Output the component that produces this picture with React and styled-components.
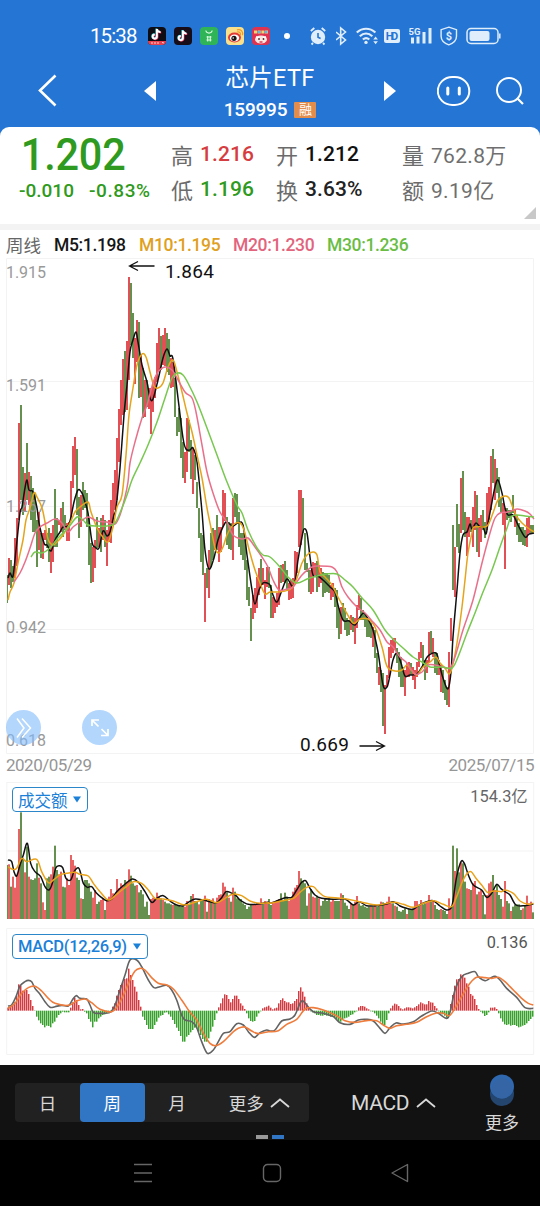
import styled, { createGlobalStyle } from "styled-components";

const GlobalStyle = createGlobalStyle`
  * {
    box-sizing: border-box;
  }
  body {
    margin: 0;
    background: #fff;
    font-family: Roboto, "Noto Sans CJK SC", sans-serif;
  }
  svg {
    display: block;
    flex: none;
  }
`;

const RED = "#e05054";
const GREEN = "#66904f";

// one candle per week: colour, high, low
const CANDLES = `
g575-603 r558-585 g560-588 g566-582 r538-578 r518-566 r423-520 g405-500 g467-515 r473-512
g443-500 r472-505 g476-520 g488-532 g493-532 g520-567 r512-550 g533-558 r533-559 r530-540
g533-548 g528-562 r533-573 r525-562 g489-547 g518-547 r520-525 r508-532 g502-537 g515-530
r523-541 r522-541 r481-520 r446-488 r437-475 g449-515 g497-538 r495-527 g482-510 g490-508
g493-527 g518-565 g543-583 r547-582 r540-568 g517-548 r528-547 g518-552 r515-540 g520-547
r530-566 r520-542 r500-543 r483-525 r470-510 r438-500 r409-462 r380-425 r359-415 g351-412
r341-410 r277-380 g283-345 g313-358 r338-384 r320-362 g322-398 r355-397 g368-418 r380-417
g380-407 r388-409 r388-434 r385-412 r377-398 r343-382 r328-372 g336-370 r335-365 r328-366
g333-372 g339-375 r358-388 r362-387 g378-417 g417-436 g408-432 g418-458 g442-478 r452-483
r418-472 g420-452 g440-479 r448-494 g455-480 g482-508 g508-538 g533-562 g535-575 r573-622
g568-588 r550-598 g533-567 g528-560 r530-550 g515-550 r527-562 r527-552 r490-527 r493-521
g517-545 g522-549 g523-550 r498-560 g493-517 g494-523 g512-547 g533-555 g533-560 g537-570
g560-600 g587-606 g608-641 r595-619 r588-613 r577-608 r568-595 g559-588 r568-585 r580-599
r567-587 g567-588 g585-618 r597-618 r600-613 r593-607 r568-605 g565-583 r564-582 g561-583
g570-590 r583-600 r580-599 r578-598 r551-583 r552-573 r490-547 r490-545 g498-533 g533-570
g563-572 g570-592 r570-594 r562-592 r563-575 g561-592 r565-587 r568-583 g572-597 g573-593
g573-592 g575-593 r585-600 r583-597 g588-607 g590-628 g608-639 r607-634 g603-620 g608-630
g618-636 g620-635 r615-630 g617-632 r618-644 r605-628 r595-610 g598-620 g610-620 g613-627
g617-637 g620-637 g623-638 r627-647 g630-658 g653-673 r667-685 g670-692 g673-726 r685-734
r675-687 r647-678 r640-658 r638-653 r638-650 g648-663 g652-677 g657-687 g667-687 r670-696
r663-677 r662-677 g663-675 r667-680 r670-689 r662-677 r652-667 r642-658 g645-667 g660-680
r660-673 r632-663 g631-653 r638-657 g652-673 g653-675 r660-675 r665-692 g670-693 g680-700
g687-705 r652-707 r618-641 g525-590 r547-597 g504-547 g524-553 r478-533 g471-530 g512-537
r517-556 r517-537 g520-532 r507-547 r491-530 g495-552 r518-557 r515-542 g510-530 g522-538
r493-530 r487-520 r456-510 g449-483 r459-500 g468-493 g477-507 g498-512 r503-525 r508-569
g508-520 g510-518 g510-522 g495-513 r510-527 g515-535 g523-542 g527-542 g527-545 g530-546
r518-547 r517-533 g525-533 g525-533`;

// turnover bars, top edge in thirds of a pixel
const TURNOVER = `
g270 r268 g335 r305 r338 r300 r162 g112 g250 r292 g215 r305 g313 g315 g310 g265 r308 g325 r382 r405
g310 g305 r298 r275 g212 g285 r298 r290 g335 g337 r310 r330 r240 r255 r272 g308 g315 r370 g372 g315
g315 g325 g350 r368 r345 g387 g380 r375 r370 g405 r375 r365 r342 r355 r362 r312 r340 r325 r330 g315
r320 r283 g302 g325 g332 r330 g352 g345 g358 g395 g380 g420 r372 r368 r370 r353 r365 g370 r375 g380
g385 g385 g388 r390 g390 g392 g390 g395 g392 r395 r378 g390 g363 r357 g378 g378 r388 g378 g378 r362
g410 r372 g375 r370 g383 r368 r360 r358 r323 r335 g352 r368 g380 r338 g350 g370 g372 g372 g385 g390
g402 g395 g388 r388 r388 r385 r385 r370 g385 r378 r380 g372 g390 r380 r382 r375 r372 g355 g375 g353
g365 r378 r370 r350 r338 r330 r288 g310 g318 g325 g392 r355 g342 r365 r368 g362 r370 g392 g378 g370
g378 g370 r380 r375 g378 g378 g378 r355 g360 g383 g392 g402 r385 g388 r380 r363 g385 g392 g390 g395
g398 g395 r395 g395 r390 g395 g392 r380 g382 r385 r380 r365 r385 g385 r392 g395 g408 g410 g405 g400
r417 g402 g402 g400 r378 r378 g390 r375 g388 g385 r378 r360 g380 r378 g390 g402 g405 r402 g405 g408
g417 r370 r398 g212 r288 g220 g292 r262 g265 g320 r340 r342 g345 r325 r318 g358 r350 r345 g360 g418
r360 r325 r320 g300 r345 g330 g360 g372 r395 r318 g378 g385 r408 g395 g390 g388 g388 g405 r400 g392
r362 r385 r380 g412`;

// macd histogram, free end of each bar in thirds of a pixel
const HISTOGRAM = `
248 246 242 240 232 212 178 183 197 197 195 207 225 243 257 275 286 295 300 307
302 303 307 295 290 278 270 265 260 262 262 262 248 232 218 225 240 253 252 260
265 282 290 307 290 290 280 275 270 268 265 262 260 245 235 212 195 180 170 162
160 131 150 165 185 200 225 245 275 285 300 312 312 312 300 290 278 272 270 263
262 268 275 285 297 308 318 333 350 350 335 330 322 315 308 310 320 330 342 350
350 340 320 305 285 265 247 235 220 208 210 222 232 222 212 212 222 235 242 252
265 280 288 290 288 275 265 259 250 247 245 242 248 253 250 248 235 225 220 228
232 232 237 235 228 222 198 187 200 215 235 248 259 262 265 270 270 272 272 270
272 272 275 275 280 285 292 290 283 280 278 275 270 268 262 259 247 243 243 245
250 253 259 260 265 272 280 290 300 300 285 265 250 242 236 238 243 250 253 250
247 247 248 250 247 243 238 232 235 238 238 228 232 233 243 250 259 265 268 272
278 272 237 210 182 163 162 148 150 158 175 185 207 212 222 240 252 260 265 273
270 262 248 248 247 252 265 280 290 298 300 298 302 300 300 303 307 305 302 300
295 288 282 275`;

const MA5 =
  "8,578 10,573 13,576 16,550 20,513 22,507 25,488 27,480 29,490 33,492 37,508 39,523 44,543 47,545 51,551 55,540 60,532 63,527 68,526 71,517 74,502 78,490 82,493 85,502 88,513 92,542 95,547 99,548 103,531 107,536 110,532 114,515 116,508 120,468 124,415 127,385 130,352 133,340 136,332 138,342 142,365 147,382 150,398 153,399 158,380 163,358 167,349 170,356 173,359 178,398 183,438 186,449 190,450 193,448 197,462 202,512 205,550 209,569 214,558 218,540 225,523 228,523 233,526 238,523 243,525 247,555 252,590 255,604 259,590 263,583 267,583 270,585 273,595 277,602 282,590 287,579 292,586 295,582 298,560 302,537 304,529 307,533 310,557 313,575 318,576 323,580 330,587 335,592 338,605 343,620 349,621 355,625 360,617 364,613 369,621 373,630 378,652 383,685 387,687 390,675 393,660 397,653 401,663 405,676 410,675 417,674 422,667 428,656 436,653 439,663 443,678 448,689 451,672 453,637 457,590 460,553 463,535 467,532 470,524 472,529 476,523 480,527 483,527 486,534 488,523 492,502 495,487 498,480 502,493 505,508 508,515 513,515 518,525 525,537 529,534 534,533";
const MA10 =
  "8,600 10,592 14,583 18,563 23,540 26,520 30,508 34,493 37,497 42,508 45,522 48,539 53,545 58,541 63,535 70,523 75,512 80,507 88,502 91,512 97,528 102,536 108,542 113,527 117,507 122,495 126,455 129,415 133,388 137,365 142,354 146,357 150,372 154,386 158,388 163,383 168,367 173,360 177,372 182,392 187,413 192,432 197,455 202,478 207,508 211,528 215,548 219,553 223,547 227,535 233,525 240,523 244,530 250,553 255,570 260,583 265,594 270,592 278,592 285,591 292,588 297,578 302,563 307,555 313,552 317,555 320,572 325,577 332,585 338,597 345,610 352,622 355,623 360,619 368,619 375,627 382,647 385,660 388,668 395,671 402,670 407,665 412,671 417,675 423,667 430,662 436,657 440,663 445,668 449,674 452,668 457,643 462,607 465,580 468,553 472,533 474,527 483,527 488,525 493,513 498,500 505,496 509,498 513,508 517,517 522,523 528,528 534,532";
const MA20 =
  "14,582 20,573 25,562 30,548 35,533 40,527 47,523 55,519 62,523 68,532 73,527 80,522 88,517 97,521 107,522 115,524 120,515 125,497 128,482 130,463 135,442 142,418 147,405 153,383 158,372 165,367 172,370 177,378 185,392 192,398 196,412 202,445 207,472 213,493 220,512 227,522 233,535 242,539 248,538 255,547 262,557 268,567 273,580 279,590 287,589 293,587 302,575 312,567 320,566 332,567 337,572 342,587 348,597 357,607 365,613 373,622 380,630 387,642 393,647 400,657 407,663 415,674 422,672 428,665 435,665 443,667 450,668 455,657 463,630 473,600 482,563 490,533 495,518 500,513 508,512 517,509 525,511 530,514 534,519";
const MA30 =
  "31,557 35,552 42,553 50,548 58,538 68,528 77,517 83,520 88,525 97,526 107,526 115,523 122,508 127,495 132,480 140,463 148,445 157,422 165,398 172,378 178,373 183,375 188,383 197,402 207,428 217,455 227,482 237,505 242,513 248,530 257,548 263,555 270,557 280,567 288,577 297,583 307,579 317,576 327,574 337,574 345,580 353,587 362,598 373,610 385,630 393,639 403,648 413,657 422,662 430,667 442,667 452,668 458,657 467,633 475,613 483,592 492,570 500,547 507,528 511,517 517,515 525,516 534,517";

// left and right halves of the small charts, each counted from its own edge
const VOL5 = [
  "24,255 35,260 42,290 50,303 60,270 70,240 82,205 92,265 105,290 122,305 135,335 147,345 157,325 167,280 178,272 188,278 198,310 212,315 222,290 235,278 242,295 250,325 262,337 275,335 290,355 305,368 320,377 335,372 350,350 372,330 397,312 415,322 435,350 455,382 470,370 490,362 510,378 530,390 550,392 565,382 585,372 610,375 630,380 650,383 665,368 678,350 692,353 708,362 720,375 745,388 775,387 805,382",
  "0,385 20,378 45,368 65,367 80,345 95,322 107,317 120,340 135,360 155,370 190,373 225,372 250,390 268,380 290,392 320,392 350,387 370,380 390,393 410,400 430,403 445,392 470,380 490,377 510,393 530,405 545,395 553,350 560,305 573,260 583,265 595,300 610,330 635,345 650,367 665,355 680,328 692,340 705,350 720,360 738,390 765,392 790,387",
];
const VOL10 = [
  "24,275 38,283 50,280 65,250 80,260 110,253 125,290 145,323 160,315 180,300 200,295 225,292 240,298 265,303 280,325 300,350 325,375 350,358 375,338 400,320 425,325 445,345 465,370 490,372 520,378 555,390 590,380 620,373 650,383 675,370 700,357 725,362 750,378 780,385 805,383",
  "0,385 40,377 70,370 90,352 110,337 130,335 145,350 165,365 195,368 230,372 260,378 290,385 325,390 370,382 400,388 430,397 460,385 490,377 520,388 545,395 560,365 575,325 590,297 603,290 618,310 635,330 652,352 670,348 695,350 705,345 730,355 750,378 775,388 790,385",
];
const DIF = [
  "24,243 35,240 48,215 60,183 75,170 85,166 95,170 105,190 120,208 135,230 150,247 165,245 185,241 205,243 217,225 228,212 240,220 260,222 270,240 280,262 300,265 330,262 345,240 360,195 375,150 390,105 410,105 425,125 445,165 462,188 480,185 500,181 515,195 530,225 545,270 555,285 575,290 590,308 605,350 622,385 640,375 655,350 670,325 690,320 710,296 730,300 745,320 763,337 780,323 800,315",
  "0,318 15,315 35,288 60,282 75,270 90,235 98,227 110,240 130,260 160,265 190,275 210,293 240,298 265,285 290,283 310,288 330,310 345,325 360,308 378,294 400,297 430,290 455,273 485,258 505,265 530,280 540,262 555,195 575,155 595,145 615,140 625,155 645,167 660,160 675,154 690,165 710,190 740,217 765,248 790,250",
];
const DEA = [
  "24,250 45,235 65,205 85,188 105,184 125,198 145,220 165,235 205,241 230,228 255,222 275,233 300,253 335,260 355,240 375,200 390,165 405,138 420,130 435,135 455,158 475,175 500,180 520,192 545,225 570,262 590,285 610,325 630,355 648,362 670,350 695,325 715,310 735,306 755,318 775,326 805,320",
  "0,320 25,317 50,298 80,283 105,252 130,248 160,255 195,270 225,287 255,292 290,287 320,287 340,300 360,310 380,302 410,298 440,292 470,275 500,264 520,265 538,272 555,250 575,215 600,175 620,157 645,158 665,160 685,157 705,170 730,195 755,220 775,235 790,240",
];

const candles = CANDLES.trim()
  .split(/\s+/)
  .map((item) => {
    const [high, low] = item.slice(1).split("-").map(Number);
    return { color: item[0] === "r" ? RED : GREEN, high, low };
  });
const turnover = TURNOVER.trim()
  .split(/\s+/)
  .map((item) => ({
    color: item[0] === "r" ? "#e86363" : GREEN,
    top: Number(item.slice(1)),
  }));
const histogram = HISTOGRAM.trim().split(/\s+/).map(Number);

const parse = (text) => text.split(" ").map((p) => p.split(",").map(Number));
const joinHalves = ([left, right]) => [
  ...parse(left),
  ...parse(right).map(([x, y]) => [x + 810, y]),
];

// smooth curve through the points
const curve = (points) => {
  let d = `M${points[0]}`;
  for (let i = 0; i < points.length - 1; i++) {
    const before = points[i - 1] || points[i];
    const from = points[i];
    const to = points[i + 1];
    const after = points[i + 2] || to;
    d += `C${from[0] + (to[0] - before[0]) / 6},${from[1] + (to[1] - before[1]) / 6} ${
      to[0] - (after[0] - from[0]) / 6
    },${to[1] - (after[1] - from[1]) / 6} ${to}`;
  }
  return d;
};

const Screen = styled.div`
  width: 540px;
  height: 1206px;
  display: flex;
  flex-direction: column;
  background: #fff;
  overflow: hidden;
`;

const Top = styled.header`
  height: 127px;
  background: #2576d4;
  color: #fff;
`;

const StatusBar = styled.div`
  display: flex;
  align-items: center;
  height: 56px;
  padding: 16px 0 0 90px;
`;

const Clock = styled.span`
  width: 58px;
  font-size: 20.5px;
  line-height: 24px;
  letter-spacing: -0.9px;
  white-space: nowrap;
`;

const AppIcons = styled.div`
  display: flex;
  gap: 8px;
`;

const Dot = styled.i`
  width: 6px;
  height: 6px;
  margin: 0 20px 0 14px;
  border-radius: 50%;
  background: #fff;
`;

const SystemIcons = styled.div`
  display: flex;
  align-items: center;
  color: #e0edfb;
`;

const TitleBar = styled.div`
  display: flex;
  align-items: center;
  height: 71px;
  padding: 0 0 2px 38px;
`;

const TitleBlock = styled.div`
  display: flex;
  flex-direction: column;
  align-items: center;
  width: 228px;
  padding-top: 6px;
`;

const Title = styled.h1`
  margin: 0;
  font-size: 23.5px;
  line-height: 32px;
  font-weight: 400;
  letter-spacing: 0.3px;
`;

const Code = styled.div`
  display: flex;
  align-items: center;
  gap: 7px;
  height: 31px;
  font-size: 19px;
  font-weight: 500;
  letter-spacing: -0.2px;
`;

const Tag = styled.span`
  width: 22px;
  height: 16px;
  background: #e38d4c;
  border-radius: 1px;
  font-size: 13px;
  line-height: 15px;
  font-weight: 400;
  text-align: center;
`;

const QuoteWrap = styled.section`
  background: #2576d4;
`;

const Quote = styled.div`
  display: flex;
  position: relative;
  height: 97px;
  padding: 9px 0 0 19px;
  background: #fff;
  border-radius: 9px 9px 0 0;
`;

const PriceBlock = styled.div`
  width: 152px;
  padding-top: 1px;
  color: #2f9a20;
`;

const Price = styled.div`
  padding-left: 2px;
  font-size: 45px;
  line-height: 36px;
  font-weight: 500;
  letter-spacing: -0.2px;
  transform: scaleX(0.92);
  transform-origin: left;
`;

const Change = styled.div`
  display: flex;
  gap: 15px;
  font-size: 19px;
  line-height: 35px;
  font-weight: 500;

  span + span {
    letter-spacing: 0.6px;
  }
`;

const StatColumn = styled.div`
  width: ${(props) => props.$width}px;
`;

const Stat = styled.div`
  display: flex;
  align-items: center;
  gap: 7px;
  height: 35px;
  font-size: 22px;
  color: #6b6b6b;
  white-space: nowrap;

  b {
    font-size: 21px;
    font-weight: ${(props) => (props.$color ? 500 : 400)};
    letter-spacing: ${(props) => (props.$color ? "0.1px" : "0.3px")};
    color: ${(props) => props.$color || "#6f6f6f"};
  }
`;

const Corner = styled.i`
  position: absolute;
  right: 4px;
  bottom: 5px;
  border: 6px solid transparent;
  border-right-color: #c8c8c8;
  border-bottom-color: #c8c8c8;
`;

const Divider = styled.div`
  height: 6px;
  background: #f3f3f3;
`;

const Legend = styled.div`
  display: flex;
  align-items: center;
  height: 28px;
  padding: 1px 0 0 6px;
  color: #666;
  white-space: nowrap;
`;

const LegendItem = styled.span`
  width: ${(props) => props.$width}px;
  color: ${(props) => props.$color};
  font-size: 17.5px;
  font-weight: ${(props) => (props.$color ? 500 : 400)};
  letter-spacing: ${(props) => (props.$color ? "-0.35px" : 0)};
`;

const Panel = styled.section`
  position: relative;
  height: ${(props) => props.$height}px;
`;

const RoundButton = styled.button`
  position: absolute;
  left: ${(props) => props.$left}px;
  top: 452px;
  display: flex;
  align-items: center;
  justify-content: center;
  width: 35px;
  height: 35px;
  padding: 0;
  border: 0;
  border-radius: 50%;
  background: rgba(128, 187, 252, 0.6);
`;

const Dates = styled.div`
  display: flex;
  justify-content: space-between;
  height: 28px;
  padding: 1px 6px 0;
  font-size: 17px;
  line-height: 21px;
  letter-spacing: -0.5px;
  color: #969696;
`;

const Selector = styled.button`
  position: absolute;
  left: 12px;
  top: ${(props) => props.$top}px;
  display: flex;
  align-items: center;
  justify-content: space-between;
  width: ${(props) => props.$width}px;
  height: 25px;
  padding: 0 6px 0 5px;
  border: 1px solid #2b87c9;
  border-radius: 4px;
  background: #fff;
  color: #1b80d8;
  font-family: inherit;
  font-size: 16.5px;
  letter-spacing: ${(props) => props.$spacing || 0}px;
  font-weight: ${(props) => (props.$spacing ? 500 : 400)};
  white-space: nowrap;
`;

const Toolbar = styled.div`
  display: flex;
  position: relative;
  height: 75px;
  padding: 18px 0 0 15px;
  background: #131213;
  color: #d8d8d8;
`;

const Periods = styled.div`
  display: flex;
  width: 294px;
  height: 39px;
  border-radius: 4px;
  background: #222122;
`;

const Period = styled.div`
  display: flex;
  align-items: center;
  justify-content: center;
  gap: 6px;
  width: ${(props) => props.$width || 65}px;
  border-radius: 4px;
  background: ${(props) => (props.$active ? "#3176c4" : "transparent")};
  color: ${(props) => (props.$active ? "#fff" : "inherit")};
  font-size: 17.5px;
`;

const Indicator = styled.div`
  display: flex;
  align-items: center;
  gap: 7px;
  width: 134px;
  height: 39px;
  margin-left: 42px;
  font-size: 21px;
  letter-spacing: -0.3px;
`;

const More = styled.div`
  display: flex;
  flex-direction: column;
  align-items: center;
  width: 34px;
  margin-top: -9px;
  font-size: 17px;
  line-height: 26px;
`;

const Pager = styled.div`
  position: absolute;
  left: 256px;
  bottom: 1px;
  display: flex;
  gap: 4px;
`;

const Page = styled.i`
  width: 12px;
  height: 4px;
  background: ${(props) => (props.$active ? "#3176c4" : "#999")};
`;

const NavBar = styled.nav`
  display: flex;
  align-items: center;
  justify-content: space-between;
  height: 66px;
  padding: 0 130px 0 133px;
  background: #000;
`;

const AppIcon = ({ fill, children }) => (
  <svg width="18" height="18" viewBox="0 0 18 18">
    <rect width="18" height="18" rx="4" fill={fill} />
    {children}
  </svg>
);

const NOTE = "M8.9 3.4v7.7a2.1 2.1 0 1 1-2.1-2.1M8.9 3.6c.4 1.9 1.7 2.9 3.7 3";

const Note = ({ dy = 0 }) => (
  <g transform={`translate(0 ${dy})`} fill="none" strokeWidth="1.9">
    <path d={NOTE} stroke="#25e0e4" transform="translate(-.5 -.4)" />
    <path d={NOTE} stroke="#f0375a" transform="translate(.6 .5)" />
    <path d={NOTE} stroke="#fff" />
  </g>
);

const StatusIcons = () => (
  <SystemIcons>
    <svg width="26" height="20" viewBox="0 0 26 20">
      <circle cx="8" cy="11" r="7.2" fill="currentColor" />
      <path d="M.8 5 4.3 2M15.2 5l-3.5-3M3 17l-1.5 1.5M13 17l1.5 1.5" stroke="currentColor" strokeWidth="1.8" />
      <path d="M8 7v4.3l2.6 1.2" stroke="#2576d4" strokeWidth="1.6" fill="none" />
    </svg>
    <svg width="20" height="20" viewBox="0 0 20 20" fill="none" stroke="currentColor" strokeWidth="1.6">
      <path d="M0 6l9.5 8-4.8 4V2l4.8 4L0 14" />
    </svg>
    <svg width="28" height="20" viewBox="0 0 28 20" fill="none" stroke="currentColor" strokeWidth="2.2">
      <path d="M.8 6.500c5.600-5 13-5 18.600 0M3.800 10.200c3.800-3.400 8.700-3.400 12.500 0M6.900 13.500c2-1.800 4.400-1.800 6.400 0" />
      <circle cx="10" cy="16.400" r="1.700" fill="currentColor" stroke="none" />
      <path d="M17.300 13.500l2.300-3 2.300 3zM17.300 15.300l2.300 3 2.300-3z" fill="currentColor" stroke="none" />
    </svg>
    <svg width="25" height="20" viewBox="0 0 25 20">
      <rect x="0" y="3" width="16" height="14" rx="2" fill="currentColor" />
      <text x="8" y="14" fontSize="11" fontWeight="700" textAnchor="middle" textLength="12.500" fill="#2576d4">
        HD
      </text>
    </svg>
    <svg width="31" height="20" viewBox="0 0 31 20" fill="currentColor">
      <text x="-.5" y="8.500" fontSize="9.500" fontWeight="700" textLength="12">
        5G
      </text>
      <path d="M2 11.500h3v6H2zM7.500 10.500h3v7h-3zM13.500 6h3v11.500h-3zM19.500 2h3v15.500h-3z" />
    </svg>
    <svg width="26" height="20" viewBox="0 0 26 20" fill="none" stroke="currentColor" strokeWidth="1.400">
      <path d="M8.800 1.200 16.500 3.700v6.600c0 4-3.200 7-7.700 8.500C4.300 17.300 1.100 14.300 1.100 10.300V3.700z" />
      <text x="8.800" y="14" fontSize="11" fontWeight="700" textAnchor="middle" fill="currentColor" stroke="none">
        $
      </text>
    </svg>
    <svg width="35" height="20" viewBox="0 0 35 20" fill="none" stroke="currentColor" strokeWidth="1.500">
      <rect x="1" y="2.500" width="31" height="15" rx="4" />
      <rect x="3.500" y="5" width="20" height="10" rx="2" fill="currentColor" stroke="none" />
      <path d="M33.800 7.500v5" />
    </svg>
  </SystemIcons>
);

const Chevron = () => (
  <svg width="20" height="10" viewBox="0 0 20 10" fill="none" stroke="#d8d8d8" strokeWidth="1.800">
    <path d="M1 9l9-7.500L19 9" />
  </svg>
);

const Caret = () => (
  <svg width="8" height="7" viewBox="0 0 8 7">
    <path d="M0 .5h8L4 6.500z" fill="#1b80d8" />
  </svg>
);

const AxisLabel = ({ y, children }) => (
  <text x="6" y={y} fontSize="16" fill="#999" textLength="40">
    {children}
  </text>
);

const PriceChart = () => (
  <svg width="540" height="496" viewBox="0 258 540 496">
    <g fill="none" stroke="#f3f3f3">
      <path d="M6.500 258.500h527v495H6.500zM7 381.500h527M7 506.500h527M7 629.500h527" />
    </g>
    <clipPath id="plot">
      <rect x="7" y="258" width="527" height="496" />
    </clipPath>
    <g clipPath="url(#plot)" shapeRendering="crispEdges">
      {candles.map(({ color, high, low }, i) => (
        <rect key={i} x={6 + i * 2} y={high} width="2" height={low - high} fill={color} />
      ))}
    </g>
    <AxisLabel y="278">1.915</AxisLabel>
    <AxisLabel y="391">1.591</AxisLabel>
    <AxisLabel y="512">1.267</AxisLabel>
    <AxisLabel y="633">0.942</AxisLabel>
    <AxisLabel y="746">0.618</AxisLabel>
    <g fill="none" strokeWidth="1.500">
      <path d={curve(parse(MA5))} stroke="#111" />
      <path d={curve(parse(MA10))} stroke="#e4a41c" />
      <path d={curve(parse(MA20))} stroke="#e8708a" />
      <path d={curve(parse(MA30))} stroke="#78c850" />
    </g>
    <g fill="none" stroke="#111" strokeWidth="1.300">
      <path d="M154.500 266H129.500M138 261.500l-8.500 4.500 8.500 4.500M359.500 746h25M376 741.500l8.500 4.500-8.500 4.500" />
    </g>
    <g fontSize="19" fill="#111">
      <text x="165" y="277.500" textLength="49">
        1.864
      </text>
      <text x="300" y="750.500" textLength="49">
        0.669
      </text>
    </g>
  </svg>
);

const VolumeChart = () => (
  <svg width="540" height="146" viewBox="0 21 1620 438">
    <path d="M20 22.500h1581M20 228h1581M20.500 21v411M1601 21v411" stroke="#f3f3f3" strokeWidth="3" />
    <g>
      {turnover.map(({ color, top }, i) => (
        <rect key={i} x={Math.max(18 + i * 6, 21)} y={top} width={i ? 6 : 3} height={432 - top} fill={color} />
      ))}
    </g>
    <g fill="none" strokeWidth="4.500">
      <path d={curve(joinHalves(VOL5))} stroke="#111" />
      <path d={curve(joinHalves(VOL10))} stroke="#eaa21b" />
    </g>
    <text x="1583" y="82" fontSize="49" fill="#666" textAnchor="end">
      154.3亿
    </text>
  </svg>
);

const MacdChart = () => (
  <svg width="540" height="137" viewBox="0 9 1620 411">
    <path d="M20 10.500h1581v378H20zM20 199h1581" fill="none" stroke="#f3f3f3" strokeWidth="3" />
    {histogram.map((end, i) => (
      <rect
        key={i}
        x={18 + i * 6 + (i ? 0 : 3)}
        y={Math.min(end, 257)}
        width={i ? 4.4 : 2}
        height={Math.max(Math.abs(end - 257), 1)}
        fill={end < 257 ? "#d33b40" : "#38a02c"}
      />
    ))}
    <g fill="none" strokeWidth="4.800">
      <path d={curve(joinHalves(DIF))} stroke="#636363" />
      <path d={curve(joinHalves(DEA))} stroke="#ee7c3c" />
    </g>
    <text x="1583" y="70" fontSize="49" fill="#555" textAnchor="end">
      0.136
    </text>
  </svg>
);

const App = () => {
  return (
    <Screen>
      <GlobalStyle />
      <Top>
        <StatusBar>
          <Clock>15:38</Clock>
          <AppIcons>
            <AppIcon fill="#100c14">
              <Note dy={-1.5} />
              <path d="M0 14h18a4 4 0 0 1-4 4H4a4 4 0 0 1-4-4z" fill="#e8404c" />
              <path d="M3 16h9M14 15.500l2 .5" stroke="#fbd6d8" strokeDasharray="2 1" />
            </AppIcon>
            <AppIcon fill="#160d18">
              <Note />
            </AppIcon>
            <AppIcon fill="#2fb457">
              <path d="M5.800 3.500c.6 3.400 5.800 3.400 6.400 0" fill="none" stroke="#d6f7de" strokeWidth="1.200" />
              <path d="M6.500 10h5M6.500 13h5M7.700 9v5.500M10.300 9v5.500" stroke="#d6f7de" strokeWidth="1.200" />
            </AppIcon>
            <AppIcon fill="#fbe08c">
              <ellipse cx="8.500" cy="10.500" rx="6.500" ry="5" fill="#e23a34" />
              <ellipse cx="8.500" cy="11" rx="4.700" ry="3.500" fill="#fff" />
              <circle cx="8" cy="11.300" r="2.600" fill="#1b1413" />
              <circle cx="7.200" cy="11" r=".8" fill="#fff" />
              <path d="M11 5c2.500-.8 4 1 3.300 3.200M11 2.800c4-1 6.500 2 5.500 5.500" fill="none" stroke="#f09a2b" strokeWidth="1.300" />
            </AppIcon>
            <AppIcon fill="#df3350">
              <path d="M2 5h14" stroke="#f5d36b" strokeWidth="3" strokeDasharray="3 .7" />
              <path d="M5.500 5h3M12.500 5h3" stroke="#68b5df" strokeWidth="2.500" />
              <ellipse cx="9" cy="12.500" rx="6" ry="4" fill="#fbe7e1" />
              <path d="M4 10l3 1M14 10l-3 1" stroke="#fff" strokeWidth="2" />
              <circle cx="7" cy="12" r=".9" fill="#55242c" />
              <circle cx="11.500" cy="12" r=".9" fill="#55242c" />
              <path d="M7.500 15h3" stroke="#e23b50" strokeWidth="1.500" />
            </AppIcon>
          </AppIcons>
          <Dot />
          <StatusIcons />
        </StatusBar>
        <TitleBar>
          <svg width="106" height="34" viewBox="0 0 106 34">
            <path d="M17.500 1.500 2 16.500l15.500 15" fill="none" stroke="#fff" strokeWidth="2.600" />
          </svg>
          <svg width="12" height="22" viewBox="0 0 12 22">
            <path d="M12 1v20L0 11z" fill="#fff" />
          </svg>
          <TitleBlock>
            <Title>芯片ETF</Title>
            <Code>
              159995 <Tag>融</Tag>
            </Code>
          </TitleBlock>
          <svg width="53" height="22" viewBox="0 0 53 22">
            <path d="M0 1v20L12 11z" fill="#fff" />
          </svg>
          <svg width="59" height="32" viewBox="0 0 59 32" fill="none" stroke="#fff" strokeWidth="2">
            <rect x=".8" y="2" width="31.500" height="28" rx="14.500" />
            <path d="M10.800 13v6M22.300 13v6" strokeWidth="3" strokeLinecap="round" />
          </svg>
          <svg width="30" height="30" viewBox="0 0 30 30" fill="none" stroke="#fff" strokeWidth="1.900">
            <circle cx="13" cy="14" r="12" />
            <path d="M21.500 22.500l5.500 5.500" strokeWidth="2.200" />
          </svg>
        </TitleBar>
      </Top>

      <QuoteWrap>
        <Quote>
          <PriceBlock>
            <Price>1.202</Price>
            <Change>
              <span>-0.010</span>
              <span>-0.83%</span>
            </Change>
          </PriceBlock>
          <StatColumn $width={105}>
            <Stat $color="#d63d40">
              高<b>1.216</b>
            </Stat>
            <Stat $color="#2f9a20">
              低<b>1.196</b>
            </Stat>
          </StatColumn>
          <StatColumn $width={126}>
            <Stat $color="#111">
              开<b>1.212</b>
            </Stat>
            <Stat $color="#222">
              换<b>3.63%</b>
            </Stat>
          </StatColumn>
          <StatColumn $width={130}>
            <Stat>
              量<b>762.8万</b>
            </Stat>
            <Stat>
              额<b>9.19亿</b>
            </Stat>
          </StatColumn>
          <Corner />
        </Quote>
      </QuoteWrap>
      <Divider />

      <Legend>
        <LegendItem $width={48}>周线</LegendItem>
        <LegendItem $width={85} $color="#161616">
          M5:1.198
        </LegendItem>
        <LegendItem $width={94} $color="#e0a021">
          M10:1.195
        </LegendItem>
        <LegendItem $width={94} $color="#e2647d">
          M20:1.230
        </LegendItem>
        <LegendItem $width={90} $color="#69bd45">
          M30:1.236
        </LegendItem>
      </Legend>
      <Panel $height={496}>
        <PriceChart />
        <RoundButton $left={6}>
          <svg width="20" height="22" viewBox="0 0 20 22" fill="none" stroke="#fff" strokeWidth="1.500">
            <path d="M3 1.500l7 9.500L3 20.500M8 1.500l8.500 9.500L8 20.500" />
          </svg>
        </RoundButton>
        <RoundButton $left={82}>
          <svg width="20" height="20" viewBox="0 0 20 20" fill="none" stroke="#fff" strokeWidth="1.700">
            <path d="M2 8V2h7M2 2l6.500 6.500M18 11v6.500h-7M18 17.500l-6.500-6.500" />
          </svg>
        </RoundButton>
      </Panel>
      <Dates>
        <span>2020/05/29</span>
        <span>2025/07/15</span>
      </Dates>
      <Panel $height={146}>
        <VolumeChart />
        <Selector $top={5} $width={76}>
          成交额 <Caret />
        </Selector>
      </Panel>
      <Panel $height={137}>
        <MacdChart />
        <Selector $top={6} $width={136} $spacing={-0.3}>
          MACD(12,26,9) <Caret />
        </Selector>
      </Panel>

      <Toolbar>
        <Periods>
          <Period>日</Period>
          <Period $active>周</Period>
          <Period>月</Period>
          <Period $width={100}>
            更多 <Chevron />
          </Period>
        </Periods>
        <Indicator>
          MACD <Chevron />
        </Indicator>
        <More>
          <svg width="26" height="36" viewBox="0 0 26 36">
            <circle cx="13" cy="20" r="12" fill="#24456d" />
            <circle cx="13" cy="12.500" r="12" fill="#2f68ae" />
            <circle cx="13" cy="14.500" r="10" fill="#3565a4" />
          </svg>
          更多
        </More>
        <Pager>
          <Page />
          <Page $active />
        </Pager>
      </Toolbar>
      <NavBar>
        <svg width="20" height="20" viewBox="0 0 20 20" stroke="#666" strokeWidth="1.400">
          <path d="M1 1.500h18M1 10h18M1 18.500h18" />
        </svg>
        <svg width="20" height="20" viewBox="0 0 20 20" fill="none" stroke="#666" strokeWidth="1.400">
          <rect x="1.500" y="1.500" width="17" height="17" rx="4" />
        </svg>
        <svg width="20" height="20" viewBox="0 0 20 20" fill="none" stroke="#666" strokeWidth="1.400" strokeLinejoin="round">
          <path d="M17.500 1.500v17L2 10z" />
        </svg>
      </NavBar>
    </Screen>
  );
};

export default App;
